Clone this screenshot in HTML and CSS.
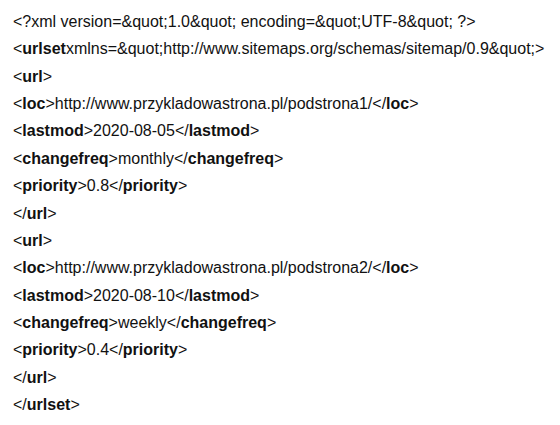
FILE: index.html
```html
<!DOCTYPE html>
<html>
<head>
<meta charset="utf-8">
<link rel="stylesheet" href="styles.css">
</head>
<body>
<div class="code">
<div class="line">&lt;?xml version=&amp;quot;1.0&amp;quot; encoding=&amp;quot;UTF-8&amp;quot; ?&gt;</div>
<div class="line">&lt;<b>urlset</b>xmlns=&amp;quot;http://www.sitemaps.org/schemas/sitemap/0.9&amp;quot;&gt;</div>
<div class="line">&lt;<b>url</b>&gt;</div>
<div class="line">&lt;<b>loc</b>&gt;http://www.przykladowastrona.pl/podstrona1/&lt;/<b>loc</b>&gt;</div>
<div class="line">&lt;<b>lastmod</b>&gt;2020-08-05&lt;/<b>lastmod</b>&gt;</div>
<div class="line">&lt;<b>changefreq</b>&gt;monthly&lt;/<b>changefreq</b>&gt;</div>
<div class="line">&lt;<b>priority</b>&gt;0.8&lt;/<b>priority</b>&gt;</div>
<div class="line">&lt;/<b>url</b>&gt;</div>
<div class="line">&lt;<b>url</b>&gt;</div>
<div class="line">&lt;<b>loc</b>&gt;http://www.przykladowastrona.pl/podstrona2/&lt;/<b>loc</b>&gt;</div>
<div class="line">&lt;<b>lastmod</b>&gt;2020-08-10&lt;/<b>lastmod</b>&gt;</div>
<div class="line">&lt;<b>changefreq</b>&gt;weekly&lt;/<b>changefreq</b>&gt;</div>
<div class="line">&lt;<b>priority</b>&gt;0.4&lt;/<b>priority</b>&gt;</div>
<div class="line">&lt;/<b>url</b>&gt;</div>
<div class="line">&lt;/<b>urlset</b>&gt;</div>
</div>
</body>
</html>
```

FILE: styles.css
```css
html, body {
  margin: 0;
  background: #ffffff;
}
body {
  padding: 8px 0 0 13px;
  font-family: "Liberation Sans", Arial, sans-serif;
  font-size: 16px;
  color: #111111;
}
.code {
  display: flex;
  flex-direction: column;
}
.line {
  line-height: 27.36px;
  white-space: nowrap;
}
.line b {
  font-weight: bold;
}
```
